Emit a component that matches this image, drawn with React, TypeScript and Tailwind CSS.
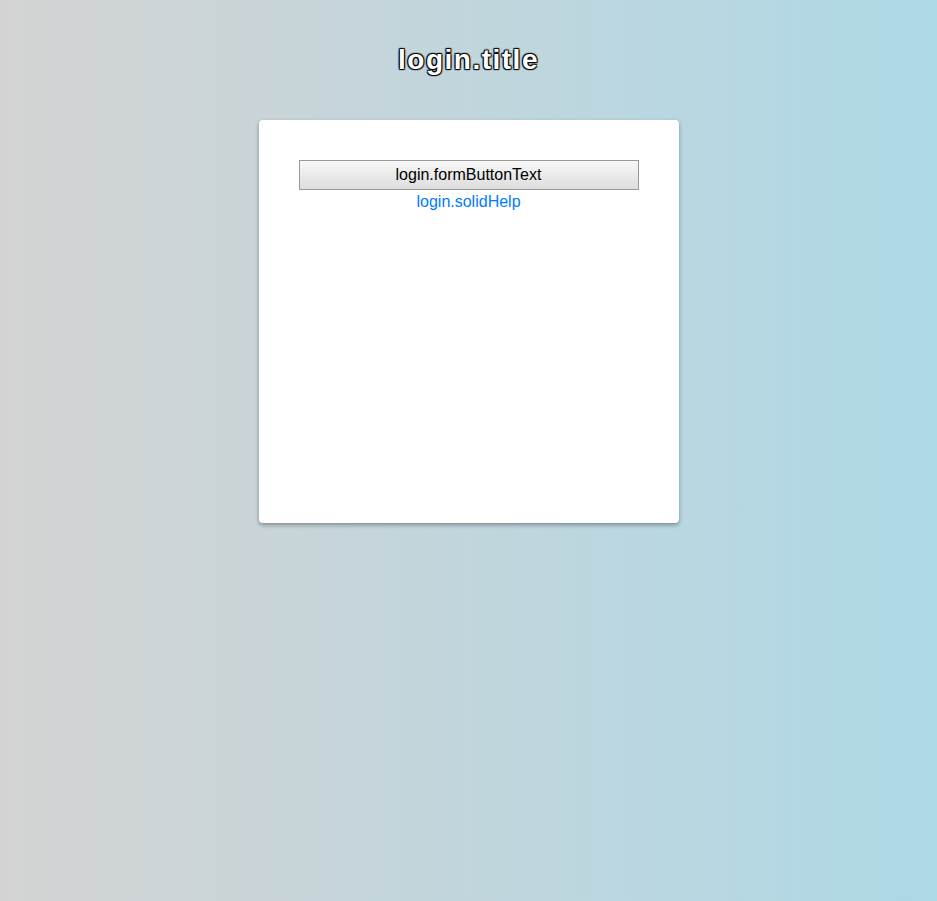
export default function App() {
  return (
    <div className="min-h-[901px] w-full bg-gradient-to-r from-[#d3d3d3] to-[#add8e6] font-['Liberation_Sans',Arial,sans-serif]">
      <div className="flex flex-col items-center pt-[42px]">
        <h1 className="text-[28px] leading-[36px] font-bold text-white tracking-[1.5px] [text-shadow:1px_1px_1px_#000,-1px_-1px_1px_#000,1px_-1px_1px_#000,-1px_1px_1px_#000]">
          login.title
        </h1>
        <div className="mt-[42px] flex h-[403px] w-[420px] flex-col items-center rounded-[4px] bg-white px-10 pt-10 shadow-[0_2px_4px_rgba(0,0,0,0.35)]">
          <button className="h-[30px] w-full border border-[#999] bg-gradient-to-b from-[#f8f8f8] to-[#dddddd] text-[16px] text-black">
            login.formButtonText
          </button>
          <a href="#" className="mt-[1px] text-[16px] leading-[22px] text-[#007bff]">
            login.solidHelp
          </a>
        </div>
      </div>
    </div>
  );
}
